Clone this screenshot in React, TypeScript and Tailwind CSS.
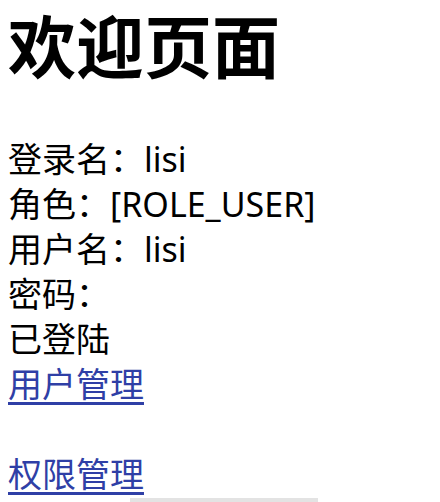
import React from 'react'

const font = { fontFamily: '"Noto Sans", "Noto Sans CJK SC", sans-serif' }

export default function App() {
  const lines = ['登录名：lisi', '角色：[ROLE_USER]', '用户名：lisi', '密码：', '已登陆']

  return (
    <div className="w-[440px] h-[502px] overflow-hidden bg-white px-2 text-black" style={font}>
      <h1 className="mt-[3px] mb-[46px] text-[68px] leading-[88px] font-bold">欢迎页面</h1>

      <div className="text-[34px] leading-[45px]">
        {lines.map((line, i) => (
          <div key={i}>{line}</div>
        ))}
        <a href="#" className="text-[#2f3fa6] underline underline-offset-[5px] decoration-[3px]">用户管理</a>
        <br />
        <br />
        <a href="#" className="text-[#2f3fa6] underline underline-offset-[5px] decoration-[3px]">权限管理</a>
      </div>

      <div className="ml-[122px] mt-[1px] h-[4px] w-[188px] bg-[#e3e3e3]" />
    </div>
  )
}
